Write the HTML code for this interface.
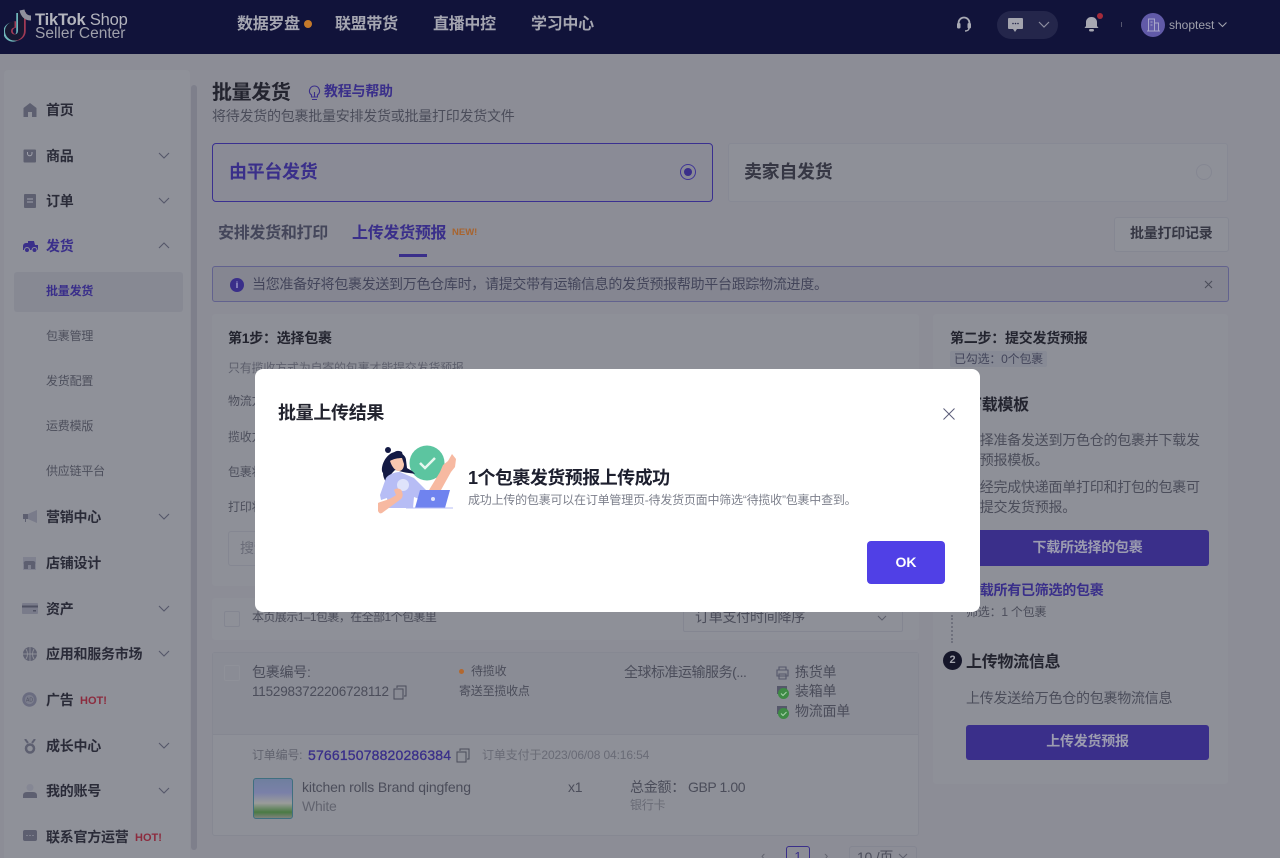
<!DOCTYPE html>
<html lang="zh"><head><meta charset="utf-8"><title>批量发货</title>
<style>
*{box-sizing:border-box}
html,body{margin:0;padding:0;width:1280px;height:858px;overflow:hidden;background:#8c8d96;font-family:"Liberation Sans","Noto Sans CJK SC",sans-serif}
.a,.t{position:absolute}
.t{white-space:nowrap;line-height:20px;transform:translateY(-10px);letter-spacing:-.018em}
.b{font-weight:700}
.nav{font-size:16px;font-weight:700;color:#a5a6b1}
.m{font-size:14px;font-weight:700;color:#2a2b38;left:46px}
.s{font-size:12px;color:#4d4f5c;left:46px;margin-top:1px}
.g{color:#4b4d5a}
.p{color:#3a2f8a}
.chev{position:absolute;width:12px;height:8px}
.card{position:absolute;background:#8e9098;border-radius:3px}
#bg{filter:blur(.35px)}
</style></head><body>
<div id="bg">
<div class="a" style="left:-4px;top:-4px;width:1288px;height:58px;background:#11133a"></div>
<svg class="a" style="left:4px;top:9px" width="30" height="33" viewBox="0 0 30 33">
<path d="M17 3v19a6.500 6.500 0 1 1-6.500-6.500" fill="none" stroke="#6fb5ba" stroke-width="6.500" transform="translate(-1.500 1)"/>
<path d="M17 3v19a6.500 6.500 0 1 1-6.500-6.500" fill="none" stroke="#a13a55" stroke-width="6.500" transform="translate(1.500 0)"/>
<path d="M17 3v19a6.500 6.500 0 1 1-6.500-6.500" fill="none" stroke="#181832" stroke-width="6"/>
<path d="M18 1c1 5 4 8 9 8" fill="none" stroke="#8f909c" stroke-width="5"/></svg>
<div class="t b" style="left:35px;top:19.500px;font-size:16.500px;color:#b3b4bd;letter-spacing:-.2px">TikTok <span style="font-weight:400">Shop</span></div>
<div class="t" style="left:35px;top:34px;font-size:15.500px;color:#9fa0ab;letter-spacing:0">Seller Center</div>
<div class="t nav" style="left:237px;top:25px">数据罗盘</div><div class="a" style="left:304px;top:20px;width:8px;height:8px;border-radius:50%;background:#c4792a"></div>
<div class="t nav" style="left:335px;top:25px">联盟带货</div>
<div class="t nav" style="left:433px;top:25px">直播中控</div>
<div class="t nav" style="left:531px;top:25px">学习中心</div>
<svg class="a" style="left:956px;top:16px" width="16" height="17" viewBox="0 0 16 17"><path d="M2.500 10V7a5.500 5.500 0 0 1 11 0v3" fill="none" stroke="#a9aab4" stroke-width="1.800"/><rect x="1" y="7" width="3.500" height="5.500" rx="1.200" fill="#a9aab4"/><rect x="11.500" y="7" width="3.500" height="5.500" rx="1.200" fill="#a9aab4"/><path d="M13 12c0 2-2 3-4 3" fill="none" stroke="#a9aab4" stroke-width="1.500"/></svg>
<div class="a" style="left:997px;top:11px;width:61px;height:28px;border-radius:14px;background:#24264b"></div>
<svg class="a" style="left:1008px;top:18px" width="15" height="14" viewBox="0 0 15 14"><path d="M1 0h13a1 1 0 0 1 1 1v9a1 1 0 0 1-1 1H9l-2 3-2-3H1a1 1 0 0 1-1-1V1a1 1 0 0 1 1-1z" fill="#a3a4ae"/><circle cx="5" cy="5.500" r=".8" fill="#24264b"/><circle cx="7.500" cy="5.500" r=".8" fill="#24264b"/><circle cx="10" cy="5.500" r=".8" fill="#24264b"/></svg>
<svg class="chev" style="left:1038px;top:21px" viewBox="0 0 12 8"><path d="M1 1l5 5 5-5" fill="none" stroke="#8d8ea0" stroke-width="1.200"/></svg>
<svg class="a" style="left:1083px;top:12px" width="21" height="21" viewBox="0 0 21 21"><path d="M8.500 5c3.500 0 5.500 2.500 5.500 5v4l1.500 2h-14L3 14v-4c0-2.500 2-5 5.500-5z" fill="#a7a8b2"/><rect x="6" y="17" width="5" height="2.500" rx="1.200" fill="#a7a8b2"/><circle cx="17" cy="4" r="3" fill="#a52a3a"/></svg>
<div class="a" style="left:1121px;top:22px;width:1px;height:5px;background:#55566f"></div>
<div class="a" style="left:1141px;top:13px;width:24px;height:24px;border-radius:50%;background:#615aa8"></div>
<svg class="a" style="left:1147px;top:18px" width="13" height="14" viewBox="0 0 13 14"><path d="M1.500 13V1h6v12M7.500 5h4v8M0 13h13M3.500 4h2M3.500 7h2" fill="none" stroke="#a7a6c9" stroke-width="1"/></svg>
<div class="t" style="left:1169px;top:25px;font-size:12px;color:#a0a1ac;letter-spacing:0">shoptest</div>
<svg class="a" style="left:1218px;top:22px" width="9" height="6" viewBox="0 0 9 6"><path d="M.5.500l4 4 4-4" fill="none" stroke="#a0a1ac" stroke-width="1.100"/></svg>

<!-- sidebar -->
<div class="a" style="left:4px;top:70px;width:186px;height:792px;background:#8f9199;border-radius:4px"></div>
<div class="a" style="left:191px;top:85px;width:6px;height:765px;background:#7e7f8b;border-radius:3px"></div>
<div class="a" style="left:14px;top:272px;width:169px;height:40px;background:#878993;border-radius:3px"></div>

<svg class="a" style="left:23px;top:103px" width="14" height="14" viewBox="0 0 14 14"><path d="M7 0l6.500 5V14H9V9H5v5H.5V5z" fill="#5d5f70"/></svg>
<div class="t m" style="top:110px">首页</div>
<svg class="a" style="left:23px;top:149px" width="14" height="14" viewBox="0 0 14 14"><rect x=".5" y=".5" width="12.500" height="13" rx="1" fill="#5d5f70"/><path d="M4.500 3v1.500a2 2 0 0 0 4.500 0V3" fill="none" stroke="#a0a1ab" stroke-width="1"/></svg>
<div class="t m" style="top:156px">商品</div>
<svg class="a" style="left:24px;top:194px" width="12" height="14" viewBox="0 0 12 14"><rect width="12" height="14" rx="1" fill="#5d5f70"/><path d="M3 5h6M3 8h6" stroke="#a0a1ab" stroke-width="1"/></svg>
<div class="t m" style="top:201px">订单</div>
<svg class="a" style="left:23px;top:240px" width="15" height="13" viewBox="0 0 15 13"><path d="M0 6a3 3 0 0 1 3-3h2V1h6l1 4h3v5H0z" fill="#3a2f8a"/><circle cx="4" cy="10" r="2.500" fill="#3a2f8a" stroke="#8f9199"/><circle cx="11.500" cy="10" r="2.500" fill="#3a2f8a" stroke="#8f9199"/></svg>
<div class="t m p" style="top:246px">发货</div>
<div class="t s p b" style="top:291px;margin-top:0">批量发货</div>
<div class="t s" style="top:335px">包裹管理</div>
<div class="t s" style="top:380px">发货配置</div>
<div class="t s" style="top:425px">运费模版</div>
<div class="t s" style="top:470px">供应链平台</div>
<svg class="a" style="left:23px;top:510px" width="14" height="14" viewBox="0 0 14 14"><path d="M0 4h5v5H3v3H2V9H0z" fill="#5d5f70"/><path d="M5 4l9-4v13L5 9z" fill="#797b8a"/></svg>
<div class="t m" style="top:517px">营销中心</div>
<svg class="a" style="left:23px;top:556px" width="14" height="14" viewBox="0 0 14 14"><rect width="13" height="13" y="1" fill="#7f818f"/><path d="M1 8a2 2 0 0 1 2-3h7a2 2 0 0 1 2 3v5H8V9H5v4H1z" fill="#5d5f70"/></svg>
<div class="t m" style="top:563px">店铺设计</div>
<svg class="a" style="left:22px;top:603px" width="16" height="11" viewBox="0 0 16 11"><rect width="16" height="11" rx="1" fill="#797b8a"/><rect y="2.500" width="16" height="2" fill="#4f5162"/><rect x="11" y="7" width="3" height="1.500" fill="#4f5162"/></svg>
<div class="t m" style="top:609px">资产</div>
<svg class="a" style="left:23px;top:647px" width="14" height="14" viewBox="0 0 14 14"><circle cx="7" cy="7" r="7" fill="#5f6172"/><path d="M0 7h14M7 0v14M3 2c2 3 2 7 0 10M11 2c-2 3-2 7 0 10" fill="none" stroke="#8f9199" stroke-width=".9"/></svg>
<div class="t m" style="top:654px">应用和服务市场</div>
<svg class="a" style="left:22px;top:692px" width="15" height="15" viewBox="0 0 15 15"><circle cx="7.500" cy="7.500" r="7.200" fill="#6a6c80"/><circle cx="7.500" cy="7.500" r="4.600" fill="#7b7d8c"/><text x="7.500" y="9.500" font-size="5" fill="#4f5162" text-anchor="middle">AD</text></svg>
<div class="t m" style="top:700px">广告</div>
<div class="t b" style="left:80px;top:701px;font-size:11px;color:#8c2b3e;letter-spacing:0">HOT!</div>
<svg class="a" style="left:24px;top:739px" width="12" height="15" viewBox="0 0 12 15"><circle cx="6" cy="9.500" r="4" fill="none" stroke="#5d5f70" stroke-width="2.500"/><path d="M1 0l3 4M11 0L8 4" stroke="#5d5f70" stroke-width="2"/></svg>
<div class="t m" style="top:746px">成长中心</div>
<svg class="a" style="left:23px;top:784px" width="14" height="14" viewBox="0 0 14 14"><circle cx="7" cy="3.500" r="3.500" fill="#858794"/><path d="M0 14v-2.500Q0 8 4 8h6q4 0 4 3.500V14z" fill="#5d5f70"/></svg>
<div class="t m" style="top:791px">我的账号</div>
<svg class="a" style="left:23px;top:830px" width="14" height="12" viewBox="0 0 14 12"><rect width="14" height="11" rx="2" fill="#5d5f70"/><path d="M3.500 5.500h1M6.500 5.500h1M9.500 5.500h1" stroke="#a0a1ab"/></svg>
<div class="t m" style="top:837px">联系官方运营</div>
<div class="t b" style="left:135px;top:838px;font-size:11px;color:#8c2b3e;letter-spacing:0">HOT!</div>

<svg class="chev" style="left:158px;top:152px" viewBox="0 0 12 8"><path d="M1 1l5 5 5-5" fill="none" stroke="#55576a" stroke-width="1.100"/></svg>
<svg class="chev" style="left:158px;top:197px" viewBox="0 0 12 8"><path d="M1 1l5 5 5-5" fill="none" stroke="#55576a" stroke-width="1.100"/></svg>
<svg class="chev" style="left:158px;top:242px" viewBox="0 0 12 8"><path d="M1 6l5-5 5 5" fill="none" stroke="#55576a" stroke-width="1.100"/></svg>
<svg class="chev" style="left:158px;top:513px" viewBox="0 0 12 8"><path d="M1 1l5 5 5-5" fill="none" stroke="#55576a" stroke-width="1.100"/></svg>
<svg class="chev" style="left:158px;top:605px" viewBox="0 0 12 8"><path d="M1 1l5 5 5-5" fill="none" stroke="#55576a" stroke-width="1.100"/></svg>
<svg class="chev" style="left:158px;top:650px" viewBox="0 0 12 8"><path d="M1 1l5 5 5-5" fill="none" stroke="#55576a" stroke-width="1.100"/></svg>
<svg class="chev" style="left:158px;top:742px" viewBox="0 0 12 8"><path d="M1 1l5 5 5-5" fill="none" stroke="#55576a" stroke-width="1.100"/></svg>
<svg class="chev" style="left:158px;top:787px" viewBox="0 0 12 8"><path d="M1 1l5 5 5-5" fill="none" stroke="#55576a" stroke-width="1.100"/></svg>

<!-- main -->
<div class="t b" style="left:212px;top:92.500px;font-size:20px;color:#23242f">批量发货</div>
<svg class="a" style="left:308px;top:85px" width="13" height="16" viewBox="0 0 13 16"><path d="M6.500 1a5 5 0 0 1 3 9v2h-6v-2a5 5 0 0 1 3-9zM4 14.500h5M6.500 12V7" fill="none" stroke="#3a2f8a" stroke-width="1.100"/></svg>
<div class="t b p" style="left:324px;top:91px;font-size:14px">教程与帮助</div>
<div class="t g" style="left:212px;top:115.500px;font-size:14px">将待发货的包裹批量安排发货或批量打印发货文件</div>

<div class="a" style="left:212px;top:143px;width:501px;height:59px;border:1px solid #3a3090;border-radius:4px;background:#8a8b96"></div>
<div class="t b p" style="left:229px;top:172px;font-size:18px">由平台发货</div>
<div class="a" style="left:680px;top:164px;width:16px;height:16px;border-radius:50%;border:1.500px solid #3f3596"></div>
<div class="a" style="left:684px;top:168px;width:8px;height:8px;border-radius:50%;background:#3a2f8a"></div>
<div class="a" style="left:728px;top:143px;width:500px;height:59px;border:1px solid #878994;border-radius:3px;background:#8e9098"></div>
<div class="t b" style="left:744px;top:172px;font-size:18px;color:#363744">卖家自发货</div>
<div class="a" style="left:1196px;top:164px;width:16px;height:16px;border-radius:50%;border:1px solid #858792"></div>

<div class="t b" style="left:218px;top:233.500px;font-size:16px;color:#44465a">安排发货和打印</div>
<div class="t b p" style="left:352px;top:233.500px;font-size:16px">上传发货预报</div>
<div class="t b" style="left:452px;top:233px;font-size:9.500px;color:#a8642e;letter-spacing:0">NEW!</div>
<div class="a" style="left:399px;top:254px;width:28px;height:3px;background:#3a2f8a"></div>
<div class="a" style="left:1114px;top:217px;width:115px;height:35px;border:1px solid #858792;border-radius:3px;background:#8e9098"></div>
<div class="t b" style="left:1130px;top:233px;font-size:14px;color:#363744">批量打印记录</div>

<div class="a" style="left:212px;top:266px;width:1017px;height:36px;border:1px solid #62628e;border-radius:3px;background:#858691"></div>
<div class="a" style="left:230px;top:278px;width:14px;height:14px;border-radius:50%;background:#3a2f8a;color:#a9a8d0;font-size:9px;font-weight:700;line-height:14px;text-align:center">i</div>
<div class="t" style="left:252px;top:283.500px;font-size:14px;color:#43455a;letter-spacing:-.021em">当您准备好将包裹发送到万色仓库时，请提交带有运输信息的发货预报帮助平台跟踪物流进度。</div>
<svg class="a" style="left:1204px;top:280px" width="9" height="9" viewBox="0 0 9 9"><path d="M1 1l7 7M8 1L1 8" stroke="#4b4d5a" stroke-width="1.100"/></svg>

<!-- step 1 -->
<div class="card" style="left:212px;top:314px;width:707px;height:272px"></div>
<div class="t b" style="left:228px;top:338px;font-size:14px;color:#23242f">第1步：选择包裹</div>
<div class="t" style="left:228px;top:368px;font-size:12px;color:#5d5f6c">只有揽收方式为自寄的包裹才能提交发货预报</div>
<div class="t s" style="left:228px;top:400px">物流方式</div>
<div class="t s" style="left:228px;top:436px">揽收方式</div>
<div class="t s" style="left:228px;top:471px">包裹状态</div>
<div class="t s" style="left:228px;top:506px">打印状态</div>
<div class="a" style="left:228px;top:531px;width:100px;height:35px;border:1px solid #858792;border-radius:3px"></div>
<div class="t" style="left:240px;top:548px;font-size:14px;color:#6a6c78">搜索</div>

<!-- list toolbar -->
<div class="card" style="left:212px;top:598px;width:707px;height:42px"></div>
<div class="a" style="left:224px;top:611px;width:16px;height:16px;border:1px solid #848691;border-radius:2px"></div>
<div class="t" style="left:252px;top:617px;font-size:12px;color:#4b4d5a;letter-spacing:-.048em">本页展示1–1包裹，在全部1个包裹里</div>
<div class="a" style="left:683px;top:600px;width:220px;height:32px;border:1px solid #848691;border-radius:2px"></div>
<div class="t" style="left:695px;top:617px;font-size:14px;color:#4b4d5a">订单支付时间降序</div>
<svg class="chev" style="left:876px;top:615px" viewBox="0 0 12 8"><path d="M2 1l4 4 4-4" fill="none" stroke="#5d5f6c" stroke-width="1"/></svg>

<!-- package -->
<div class="a" style="left:212px;top:652px;width:707px;height:184px;background:#8e9098;border:1px solid #868892;border-radius:3px"></div>
<div class="a" style="left:213px;top:653px;width:705px;height:82px;background:#8a8c95;border-bottom:1px solid #858791"></div>
<div class="a" style="left:224px;top:665px;width:16px;height:16px;border:1px solid #8f9199;border-radius:2px"></div>
<div class="t g" style="left:252px;top:672px;font-size:14px">包裹编号:</div>
<div class="t g" style="left:252px;top:692px;font-size:13.500px;letter-spacing:-.2px">1152983722206728112</div>
<svg class="a" style="left:393px;top:685px" width="14" height="15" viewBox="0 0 14 15"><path d="M4 3V1h9v10h-2M1 4h9v10H1z" fill="none" stroke="#4b4d5a"/></svg>
<div class="a" style="left:459px;top:669px;width:5px;height:5px;border-radius:50%;background:#b3682f"></div>
<div class="t g" style="left:471px;top:671px;font-size:12px">待揽收</div>
<div class="t g" style="left:459px;top:691px;font-size:12px">寄送至揽收点</div>
<div class="t g" style="left:624px;top:672px;font-size:14px;letter-spacing:-.035em">全球标准运输服务(...</div>
<svg class="a" style="left:776px;top:666px" width="13" height="14" viewBox="0 0 13 14"><path d="M3 4V1h7v3M1 4h11v6H1zM3 8h7v5H3z" fill="none" stroke="#55576a" stroke-width="1.100"/></svg>
<div class="t g" style="left:795px;top:672px;font-size:14px">拣货单</div>
<svg class="a" style="left:776px;top:685px" width="14" height="14" viewBox="0 0 14 14"><rect x="1" y="1" width="10" height="8" fill="#55576a"/><circle cx="7.500" cy="8.500" r="5.500" fill="#3e8a45"/><path d="M5 8.500l2 2 3.500-3.500" fill="none" stroke="#a8d3ac"/></svg>
<div class="t g" style="left:795px;top:691px;font-size:14px">装箱单</div>
<svg class="a" style="left:776px;top:705px" width="14" height="14" viewBox="0 0 14 14"><rect x="1" y="1" width="10" height="8" fill="#55576a"/><circle cx="7.500" cy="8.500" r="5.500" fill="#3e8a45"/><path d="M5 8.500l2 2 3.500-3.500" fill="none" stroke="#a8d3ac"/></svg>
<div class="t g" style="left:795px;top:711px;font-size:14px">物流面单</div>

<div class="t" style="left:252px;top:755px;font-size:12px;color:#62646f">订单编号:</div>
<div class="t p" style="left:308px;top:755px;font-size:14px;letter-spacing:.17px;-webkit-text-stroke:.3px #3a2f8a">576615078820286384</div>
<svg class="a" style="left:456px;top:748px" width="14" height="15" viewBox="0 0 14 15"><path d="M4 3V1h9v10h-2M1 4h9v10H1z" fill="none" stroke="#4b4d5a"/></svg>
<div class="t" style="left:482px;top:755px;font-size:12px;color:#696b76;letter-spacing:-.01em">订单支付于2023/06/08 04:16:54</div>
<div class="a" style="left:253px;top:778px;width:40px;height:41px;border:1.500px solid #3f6f80;border-radius:3px;background:linear-gradient(180deg,#6f7f9e 0,#7a80a8 35%,#9a9c9a 62%,#4a7a44 85%,#7f827c 100%)"></div>
<div class="t g" style="left:302px;top:787px;font-size:14px;letter-spacing:-.01em">kitchen rolls Brand qingfeng</div>
<div class="t" style="left:302px;top:806px;font-size:14px;color:#62646f">White</div>
<div class="t g" style="left:568px;top:787px;font-size:14px">x1</div>
<div class="t g" style="left:630px;top:787px;font-size:14px">总金额：</div>
<div class="t g" style="left:688px;top:787px;font-size:14px;letter-spacing:-.03em">GBP 1.00</div>
<div class="t" style="left:630px;top:805px;font-size:12px;color:#696b76">银行卡</div>

<div class="t" style="left:761px;top:856px;font-size:13px;color:#62646f">‹</div>
<div class="a" style="left:786px;top:846px;width:24px;height:24px;border:1px solid #3a2f8a;border-radius:3px;color:#3a2f8a;font-size:13px;text-align:center;line-height:20px">1</div>
<div class="t" style="left:824px;top:856px;font-size:13px;color:#62646f">›</div>
<div class="a" style="left:849px;top:846px;width:68px;height:24px;border:1px solid #848691;border-radius:3px"></div>
<div class="t g" style="left:857px;top:857px;font-size:14px">10 /页</div>
<svg class="chev" style="left:897px;top:853px" viewBox="0 0 12 8"><path d="M2 1l4 4 4-4" fill="none" stroke="#5d5f6c" stroke-width="1"/></svg>

<!-- step 2 -->
<div class="card" style="left:933px;top:314px;width:295px;height:470px"></div>
<div class="t b" style="left:950px;top:338px;font-size:14px;color:#23242f">第二步：提交发货预报</div>
<div class="a" style="left:950px;top:351px;width:97px;height:16px;background:#878a95;border-radius:2px"></div>
<div class="t" style="left:954px;top:359px;font-size:12px;color:#43455a">已勾选：0个包裹</div>
<div class="t b" style="left:966px;top:405.500px;font-size:16px;color:#23242f">下载模板</div>
<div class="t g" style="left:966px;top:440px;font-size:14px">选择准备发送到万色仓的包裹并下载发</div>
<div class="t g" style="left:966px;top:460px;font-size:14px">货预报模板。</div>
<div class="t g" style="left:966px;top:487px;font-size:14px">已经完成快递面单打印和打包的包裹可</div>
<div class="t g" style="left:966px;top:507px;font-size:14px">以提交发货预报。</div>
<div class="a" style="left:966px;top:530px;width:243px;height:36px;background:#3a2f8a;border-radius:3px;color:#9c9cb0;font-size:14px;font-weight:700;text-align:center;line-height:34px;letter-spacing:-.018em">下载所选择的包裹</div>
<div class="t b p" style="left:966px;top:590px;font-size:14px">下载所有已筛选的包裹</div>
<div class="t" style="left:966px;top:612px;font-size:12px;color:#4b4d5a">筛选：1 个包裹</div>
<div class="a" style="left:951px;top:615px;height:28px;border-left:2px dotted #6f717d"></div>
<div class="a" style="left:943px;top:651px;width:19px;height:19px;border-radius:50%;background:#15162a;color:#a3a4ae;font-size:11px;font-weight:700;text-align:center;line-height:19px">2</div>
<div class="t b" style="left:966px;top:662.500px;font-size:16px;color:#23242f">上传物流信息</div>
<div class="t g" style="left:966px;top:698px;font-size:14px">上传发送给万色仓的包裹物流信息</div>
<div class="a" style="left:966px;top:725px;width:243px;height:35px;background:#3a2f8a;border-radius:3px;color:#9c9cb0;font-size:14px;font-weight:700;text-align:center;line-height:33px;letter-spacing:-.018em">上传发货预报</div>
</div>

<!-- modal -->
<div class="a" style="left:255px;top:369px;width:725px;height:243px;background:#fff;border-radius:8px"></div>
<div class="t b" style="left:278px;top:413px;font-size:18px;color:#23242f">批量上传结果</div>
<svg class="a" style="left:943px;top:408px" width="12" height="12" viewBox="0 0 12 12"><path d="M.5.500l11 11M11.500.500l-11 11" stroke="#5b5d78" stroke-width="1"/></svg>
<svg class="a" style="left:376px;top:443px" width="84" height="76" viewBox="0 0 84 76">
<circle cx="51" cy="20" r="17.500" fill="#5cc5a0"/>
<path d="M44 20l5 5 10-10" fill="none" stroke="#e6f7ef" stroke-width="2.500"/>
<path d="M50 52L64 29l3-7 5-4 4-7 4 5-1 8-4 5-15 27z" fill="#f7b9a1"/>
<path d="M7 30C3 26 10 8 21 9c6 1 9 5 9 8l1 8c3 2 6 3 8 6-4-1-8-1-12-2l-8-2c-2 2-6 6-9 12-2-3-3-6-3-9z" fill="#141a44"/>
<circle cx="12" cy="7" r="3" fill="#141a44"/>
<path d="M4 52l6-17c2-3 8-6 14-6l14 6 14 14-6 8-8-3-1 11H12l-1-10-6 2z" fill="#b7bdf5"/>
<circle cx="27" cy="42" r="6" fill="#dfe3fb"/>
<path d="M14 18c3-2 8-3 12-3l2 6c0 4-2 7-5 7-4 0-7-4-9-10z" fill="#f7c7b0"/>
<path d="M14 17c4-4 9-5 13-4l-1-4c-5-3-11 0-12 8z" fill="#141a44"/>
<path d="M2 60c4-2 12-3 18-8l-2-5c3-3 8-1 8 2 1 2 1 5-1 7L6 70c-2 1-3 0-4-2z" fill="#f7b9a1"/>
<path d="M44 47h30l-5 18H39z" fill="#6f83ef"/>
<circle cx="57" cy="56" r="2" fill="#dfe3fb"/>
<path d="M30 65h47" stroke="#b7bdf5" stroke-width="1"/>
</svg>
<div class="t b" style="left:468px;top:478px;font-size:18px;color:#1d1f2e;letter-spacing:-.03em">1个包裹发货预报上传成功</div>
<div class="t" style="left:468px;top:500px;font-size:12px;color:#7d808c">成功上传的包裹可以在订单管理页-待发货页面中筛选“待揽收”包裹中查到。</div>
<div class="a" style="left:867px;top:541px;width:78px;height:43px;background:#5040e6;border-radius:4px;color:#fff;font-size:14px;font-weight:700;text-align:center;line-height:43px">OK</div>
</body></html>
